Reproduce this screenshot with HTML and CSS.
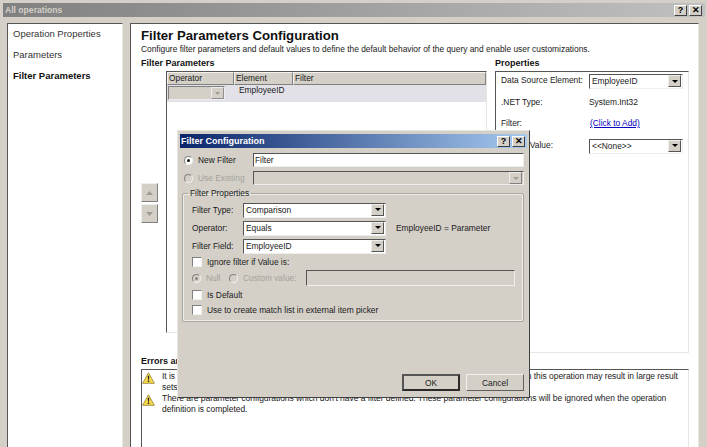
FILE: index.html
```html
<!DOCTYPE html>
<html lang="en">
<head>
<meta charset="utf-8">
<title>All operations</title>
<link rel="stylesheet" href="styles.css">
</head>
<body>
<div class="window">
  <header class="titlebar">
    <span class="title-text">All operations</span>
    <span class="title-btns"><span class="cap-btn">?</span><span class="cap-btn">✕</span></span>
  </header>
  <div class="content">
    <nav class="nav">
      <div class="nav-item">Operation Properties</div>
      <div class="nav-item">Parameters</div>
      <div class="nav-item nav-active">Filter Parameters</div>
    </nav>
    <main class="main">
      <h1 class="main-title">Filter Parameters Configuration</h1>
      <p class="main-desc">Configure filter parameters and default values to define the default behavior of the query and enable user customizations.</p>
      <div class="columns">
        <section class="col-left">
          <h2 class="section-label">Filter Parameters</h2>
          <div class="left-body">
            <div class="arrows">
              <span class="arrow-btn"><svg width="7" height="4" viewBox="0 0 7 4"><path d="M3.5 0 7 4H0z" fill="#a09c94"/></svg></span>
              <span class="arrow-btn"><svg width="7" height="4" viewBox="0 0 7 4"><path d="M0 0h7L3.5 4z" fill="#a09c94"/></svg></span>
            </div>
            <div class="grid-box">
              <div class="grid-head">
                <span class="gh gh-op">Operator</span><span class="gh gh-el">Element</span><span class="gh gh-fi">Filter</span>
              </div>
              <div class="grid-row">
                <span class="row-select"><span class="row-select-btn"><svg width="5" height="3" viewBox="0 0 5 3"><path d="M0 0h5L2.500 3z" fill="#a09c94"/></svg></span></span>
                <span class="row-el">EmployeeID</span>
              </div>
            </div>
          </div>
        </section>
        <section class="col-right">
          <h2 class="section-label">Properties</h2>
          <div class="props">
            <div class="prop-row"><span class="prop-label">Data Source Element:</span><span class="select select-prop"><span class="select-text">EmployeeID</span><span class="select-btn"><svg width="6" height="3" viewBox="0 0 6 3"><path d="M0 0h6L3 3z" fill="#000"/></svg></span></span></div>
            <div class="prop-row"><span class="prop-label">.NET Type:</span><span class="prop-val">System.Int32</span></div>
            <div class="prop-row"><span class="prop-label">Filter:</span><a class="prop-link">(Click to Add)</a></div>
            <div class="prop-row"><span class="prop-label">Default Value:</span><span class="select select-prop"><span class="select-text">&lt;&lt;None&gt;&gt;</span><span class="select-btn"><svg width="6" height="3" viewBox="0 0 6 3"><path d="M0 0h6L3 3z" fill="#000"/></svg></span></span></div>
          </div>
        </section>
      </div>
      <section class="errors">
        <h2 class="section-label">Errors and Warnings</h2>
        <div class="errors-box">
          <div class="err-row">
            <svg class="warn" width="13" height="12" viewBox="0 0 14 13"><path d="M7 .8 13.400 12.300H.6z" fill="#f7d84a" stroke="#8a7a30" stroke-width=".8"/><path d="M6.200 4h1.600l-.3 4.500h-1zM6.200 9.300h1.600v1.600H6.200z" fill="#222"/></svg>
            <span>It is recommended that you define a limit filter for this operation. Not having the limit filter defined on this operation may result in large result<br>sets.</span>
          </div>
          <div class="err-row">
            <svg class="warn" width="13" height="12" viewBox="0 0 14 13"><path d="M7 .8 13.400 12.300H.6z" fill="#f7d84a" stroke="#8a7a30" stroke-width=".8"/><path d="M6.200 4h1.600l-.3 4.500h-1zM6.200 9.300h1.600v1.600H6.200z" fill="#222"/></svg>
            <span>There are parameter configurations which don't have a filter defined. These parameter configurations will be ignored when the operation<br>definition is completed.</span>
          </div>
        </div>
      </section>
    </main>
  </div>
</div>

<div class="dialog">
  <header class="dlg-title">
    <span>Filter Configuration</span>
    <span class="title-btns"><span class="cap-btn">?</span><span class="cap-btn">✕</span></span>
  </header>
  <div class="dlg-body">
    <div class="dlg-line">
      <span class="radio-wrap"><span class="radio radio-on"></span><span>New Filter</span></span>
      <span class="input">Filter</span>
    </div>
    <div class="dlg-line dlg-line-2">
      <span class="radio-wrap disabled"><span class="radio radio-off"></span><span>Use Existing</span></span>
      <span class="input input-disabled"><span class="select-btn select-btn-dis"><svg width="6" height="3" viewBox="0 0 6 3"><path d="M0 0h6L3 3z" fill="#a09c94"/></svg></span></span>
    </div>
    <fieldset class="group">
      <legend class="group-legend">Filter Properties</legend>
      <div class="fld-row"><span class="fld-label">Filter Type:</span><span class="select select-dlg"><span class="select-text">Comparison</span><span class="select-btn"><svg width="6" height="3" viewBox="0 0 6 3"><path d="M0 0h6L3 3z" fill="#000"/></svg></span></span></div>
      <div class="fld-row"><span class="fld-label">Operator:</span><span class="select select-dlg"><span class="select-text">Equals</span><span class="select-btn"><svg width="6" height="3" viewBox="0 0 6 3"><path d="M0 0h6L3 3z" fill="#000"/></svg></span></span><span class="fld-hint">EmployeeID = Parameter</span></div>
      <div class="fld-row"><span class="fld-label">Filter Field:</span><span class="select select-dlg"><span class="select-text">EmployeeID</span><span class="select-btn"><svg width="6" height="3" viewBox="0 0 6 3"><path d="M0 0h6L3 3z" fill="#000"/></svg></span></span></div>
      <div class="chk-row chk-first"><span class="check"></span><span>Ignore filter if Value is:</span></div>
      <div class="null-row disabled">
        <span class="radio radio-on"></span><span class="null-text">Null</span>
        <span class="radio radio-off"></span><span class="custom-text">Custom value:</span>
        <span class="input input-disabled custom-input"></span>
      </div>
      <div class="chk-row chk-default"><span class="check"></span><span>Is Default</span></div>
      <div class="chk-row chk-last"><span class="check"></span><span>Use to create match list in external item picker</span></div>
    </fieldset>
    <div class="dlg-actions">
      <span class="btn btn-default">OK</span>
      <span class="btn">Cancel</span>
    </div>
  </div>
</div>
</body>
</html>
```
FILE: styles.css
```css
* { box-sizing: border-box; }
html, body { margin: 0; padding: 0; }
body {
  width: 707px; height: 447px; overflow: hidden; position: relative;
  background: #d4d0c8;
  font-family: "Liberation Sans", Arial, sans-serif;
  font-size: 8.400px; line-height: 12px; color: #1a1a1a;
}
.window { display: flex; flex-direction: column; height: 447px; padding-top: 3px; }
.titlebar {
  height: 14px; margin: 0 2px 0 3px; padding: 0 3px 0 2px;
  display: flex; align-items: center; justify-content: space-between;
  background: linear-gradient(90deg, #808080, #c0c0c0);
  color: #d4d0c8; font-weight: 700; font-size: 8.600px;
}
.title-btns { display: flex; gap: 2px; }
.cap-btn {
  width: 13px; height: 11px; display: flex; align-items: center; justify-content: center;
  background: #d4d0c8; color: #000; font-size: 9px; font-weight: 700; line-height: 10px;
  border: 1px solid; border-color: #fff #404040 #404040 #fff;
}
.content { flex: 1; display: flex; gap: 7px; padding: 6px 8px 0 7px; min-height: 0; }
.nav {
  width: 116px; background: #fff; padding: 4px 5px;
  border: 1px solid; border-color: #555 #e8e6e0 #e8e6e0 #555; border-bottom: 0;
}
.nav-item { height: 21px; font-size: 9.500px; color: #333; }
.nav-active { font-weight: 700; color: #111; }
.main {
  flex: 1; background: #fff; padding: 3px 9px 0 10px; display: flex; flex-direction: column;
  border: 1px solid; border-color: #555 #e8e6e0 #e8e6e0 #555; border-bottom: 0; min-width: 0;
}
.main-title { margin: 0; font-size: 13.200px; line-height: 17px; font-weight: 700; color: #111; }
.main-desc { margin: 0; line-height: 11px; white-space: nowrap; }
.columns { display: flex; gap: 8px; margin-top: 2px; height: 296px; }
.section-label { margin: 0 0 2px; font-size: 9px; line-height: 12px; font-weight: 700; color: #111; }
.col-left { width: 347px; display: flex; flex-direction: column; }
.left-body { display: flex; gap: 8px; height: 262px; }
.arrows { width: 17px; padding-top: 112px; display: flex; flex-direction: column; gap: 2px; }
.arrow-btn {
  height: 19px; display: flex; align-items: center; justify-content: center; background: #d4d0c8;
  border: 1px solid; border-color: #eee #808080 #808080 #eee;
}
.grid-box {
  width: 321px; background: #fff;
  border: 1px solid; border-color: #555 #e8e6e0 #e8e6e0 #555;
}
.grid-head { display: flex; height: 13px; background: #d4d0c8; }
.gh { padding-left: 1px; border: 1px solid; border-color: #f4f2ee #808080 #808080 #f4f2ee; line-height: 11px; }
.gh-op { width: 67px; }
.gh-el { width: 59px; }
.gh-fi { flex: 1; }
.grid-row { display: flex; height: 17px; background: #e2e1e8; }
.row-select {
  width: 57px; height: 14px; margin: 1px 2px 0 1px; background: #d4d0c8;
  border: 1px solid; border-color: #808080 #eee #eee #808080; display: flex; justify-content: flex-end;
}
.row-select-btn {
  width: 13px; display: flex; align-items: center; justify-content: center; background: #d4d0c8;
  border: 1px solid; border-color: #eee #909090 #909090 #eee;
}
.row-el { margin-left: 12px; line-height: 11px; }
.col-right { width: 194px; }
.props {
  height: 282px; padding: 2px 5px;
  border: 1px solid; border-color: #555 #e8e6e0 #e8e6e0 #555;
}
.prop-row { display: flex; align-items: flex-start; height: 21.500px; }
.prop-label { width: 88px; flex: none; white-space: nowrap; }
.prop-link { color: #0000c0; text-decoration: underline; padding-left: 1px; }
.select {
  display: flex; justify-content: space-between; background: #fff; height: 15px;
  border: 1px solid; border-color: #555 #eee #eee #555; padding-right: 1px;
}
.select-prop { width: 96px; }
.select-text { padding-left: 2px; line-height: 13px; }
.select-btn {
  width: 13px; height: 12px; display: flex; align-items: center; justify-content: center;
  background: #d4d0c8; border: 1px solid; border-color: #eee #555 #555 #eee;
}
.errors { margin-top: 2px; flex: 1; display: flex; flex-direction: column; min-height: 0; }
.errors-box {
  flex: 1; padding: 1px 8px 0 0; background: #fff;
  border: 1px solid; border-color: #555 #e8e6e0 #e8e6e0 #555; border-bottom: 0;
}
.err-row { display: flex; gap: 7px; line-height: 10.500px; font-size: 8.500px; letter-spacing: -.045px; margin-bottom: 1px; }
.err-row span { white-space: nowrap; }
.warn { flex: none; margin-top: 1px; }

.dialog {
  position: absolute; left: 177px; top: 130px; width: 353px; height: 268px;
  background: #d4d0c8; padding: 3px 2px 0;
  border: 1px solid; border-color: #e8e6e0 #404040 #404040 #e8e6e0;
}
.dlg-title {
  height: 14px; padding: 0 2px 0 1px; display: flex; align-items: center; justify-content: space-between;
  background: linear-gradient(90deg, #0a246a, #a6caf0);
  color: #fff; font-weight: 700; font-size: 9px;
}
.dlg-body { padding: 5px 3px 0 2px; }
.dlg-line { display: flex; align-items: center; height: 14px; }
.dlg-line-2 { margin-top: 4px; }
.radio-wrap { width: 71px; flex: none; display: flex; align-items: center; gap: 5px; padding-left: 2px; }
.disabled { color: #a5a29a; }
.radio {
  width: 9px; height: 9px; border-radius: 50%; background: #fff; flex: none; display: inline-block;
  border: 1px solid; border-color: #808080 #f4f2ee #f4f2ee #808080; position: relative;
}
.radio-on::after {
  content: ""; position: absolute; left: 2px; top: 2px; width: 3px; height: 3px; border-radius: 50%; background: #111;
}
.disabled .radio { background: #d4d0c8; }
.disabled .radio-on::after { background: #8a8880; }
.input {
  flex: 1; height: 14px; background: #fff; padding-left: 1px; line-height: 13px; display: flex; justify-content: flex-start;
  border: 1px solid; border-color: #555 #eee #eee #555;
}
.input-disabled { background: #d4d0c8; justify-content: flex-end; padding: 0 1px 0 0; }
.select-btn-dis { border-color: #eee #808080 #808080 #eee; }
.group {
  margin: 3px 0 0; padding: 3px 7px 0 9px; height: 134px; border: 1px solid #a8a69e; border-radius: 2px;
  box-shadow: inset 0 0 0 1px #eeece8;
  min-width: 0;
}
.group-legend { padding: 0 2px; margin-left: -4px; line-height: 10px; }
.fld-row { display: flex; align-items: center; height: 18px; }
.fld-label { width: 51px; flex: none; }
.select-dlg { width: 143px; }
.fld-hint { margin-left: 10px; }
.chk-row { display: flex; align-items: center; gap: 5px; height: 12px; }
.chk-first { margin-top: 1px; }
.check {
  width: 10px; height: 10px; background: #fff; flex: none;
  border: 1px solid; border-color: #808080 #f4f2ee #f4f2ee #808080;
}
.null-row { display: flex; align-items: center; height: 16px; margin-top: 2px; }
.null-text { margin-left: 5px; width: 23px; }
.custom-text { margin-left: 5px; width: 63px; }
.custom-input { flex: none; width: 209px; height: 16px; }
.chk-default { margin-top: 3px; }
.chk-last { margin-top: 3px; }
.dlg-actions { display: flex; justify-content: flex-end; gap: 6px; margin-top: 52px; }
.btn {
  width: 58px; height: 17px; display: flex; align-items: center; justify-content: center; background: #d4d0c8;
  border: 1px solid; border-color: #f4f2ee #606060 #606060 #f4f2ee;
}
.btn-default { border: 2px solid #2a2a2a; border-top-color: #555; border-left-color: #555; }
```
